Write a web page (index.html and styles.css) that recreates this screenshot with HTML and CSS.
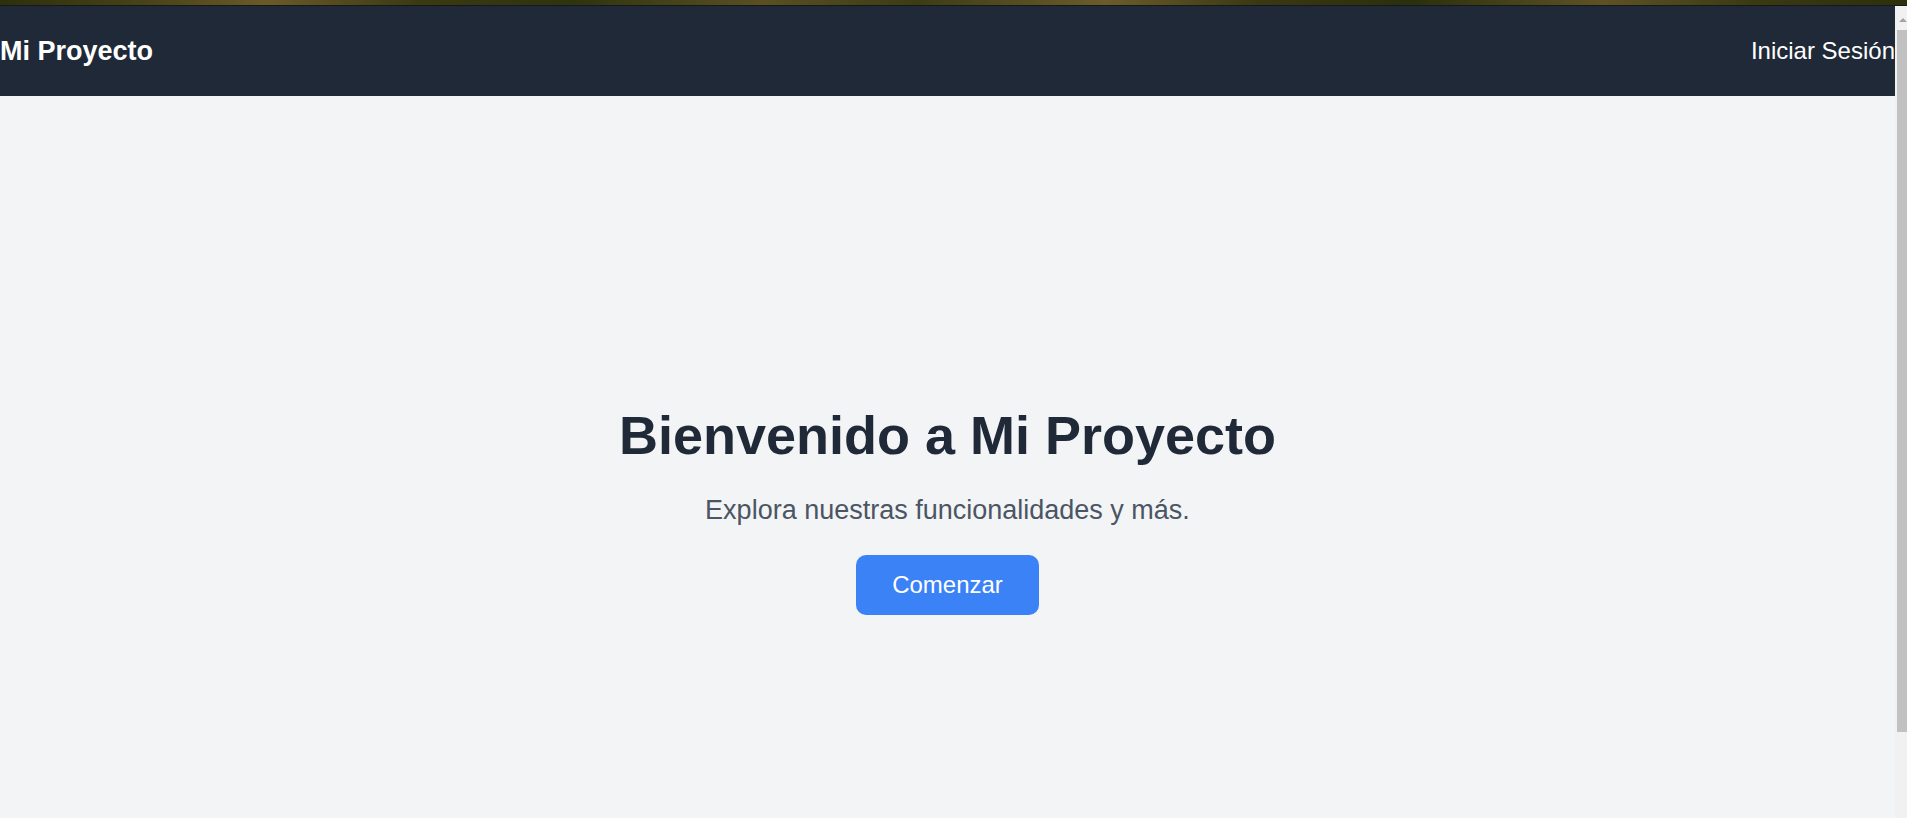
FILE: index.html
```html
<!DOCTYPE html>
<html lang="es">
<head>
<meta charset="utf-8">
<title>Mi Proyecto</title>
<link rel="stylesheet" href="styles.css">
</head>
<body>
<div class="strip"></div>
<div class="window">
  <div class="page">
    <header class="nav">
      <a class="logo" href="#">Mi Proyecto</a>
      <a class="login" href="#">Iniciar Sesión</a>
    </header>
    <main class="hero">
      <h1 class="hero-title">Bienvenido a Mi Proyecto</h1>
      <p class="hero-text">Explora nuestras funcionalidades y más.</p>
      <button class="cta" type="button">Comenzar</button>
    </main>
  </div>
  <div class="scrollbar" aria-hidden="true">
    <div class="sb-btn"><span class="sb-arrow"></span></div>
    <div class="sb-thumb"></div>
  </div>
</div>
</body>
</html>
```

FILE: styles.css
```css
html, body {
  margin: 0;
  height: 100%;
  overflow: hidden;
}

body {
  font-family: "Liberation Sans", Arial, sans-serif;
  background: #f3f4f6;
}

.strip {
  height: 5px;
  background: linear-gradient(90deg, #2c300c 0%, #4a4418 8%, #6a5a28 14%, #3a3a12 22%, #2e340e 30%, #5a5022 40%, #3c3c14 48%, #6b5c2a 58%, #3a3812 66%, #2a300c 74%, #5e5224 84%, #3a3a12 92%, #2c300c 100%);
  border-bottom: 1px solid #16181c;
}

.window {
  display: flex;
  height: 812px;
  overflow: hidden;
  background: #f3f4f6;
}

.page {
  flex: 1;
  min-width: 0;
  overflow: hidden;
}

.scrollbar {
  width: 12px;
  flex: none;
  display: flex;
  flex-direction: column;
  background: #f1f1f1;
}

.sb-btn {
  height: 24px;
  flex: none;
  display: flex;
  align-items: flex-start;
  padding-top: 12px;
  box-sizing: border-box;
}

.sb-arrow {
  margin-left: 4px;
  width: 0;
  height: 0;
  border-left: 4px solid transparent;
  border-right: 4px solid transparent;
  border-bottom: 4px solid #a3a3a3;
}

.sb-thumb {
  height: 702px;
  flex: none;
  margin-left: 2px;
  background: #c1c1c1;
}

.nav {
  height: 90px;
  background: #1f2937;
  display: flex;
  align-items: center;
  justify-content: space-between;
}

.logo {
  color: #ffffff;
  text-decoration: none;
  font-size: 27px;
  font-weight: 700;
}

.login {
  color: #ffffff;
  text-decoration: none;
  font-size: 24px;
}

.hero {
  height: 831px;
  display: flex;
  flex-direction: column;
  align-items: center;
  justify-content: center;
}

.hero-title {
  margin: 0 0 28px;
  font-size: 54px;
  line-height: 1;
  font-weight: 700;
  color: #1f2937;
}

.hero-text {
  margin: 0 0 24px;
  font-size: 27px;
  line-height: 1.5;
  color: #4b5563;
}

.cta {
  font-family: inherit;
  font-size: 24px;
  line-height: 36px;
  padding: 12px 36.5px;
  background: #3b82f6;
  color: #ffffff;
  border: 0;
  border-radius: 10px;
  cursor: pointer;
}
```
